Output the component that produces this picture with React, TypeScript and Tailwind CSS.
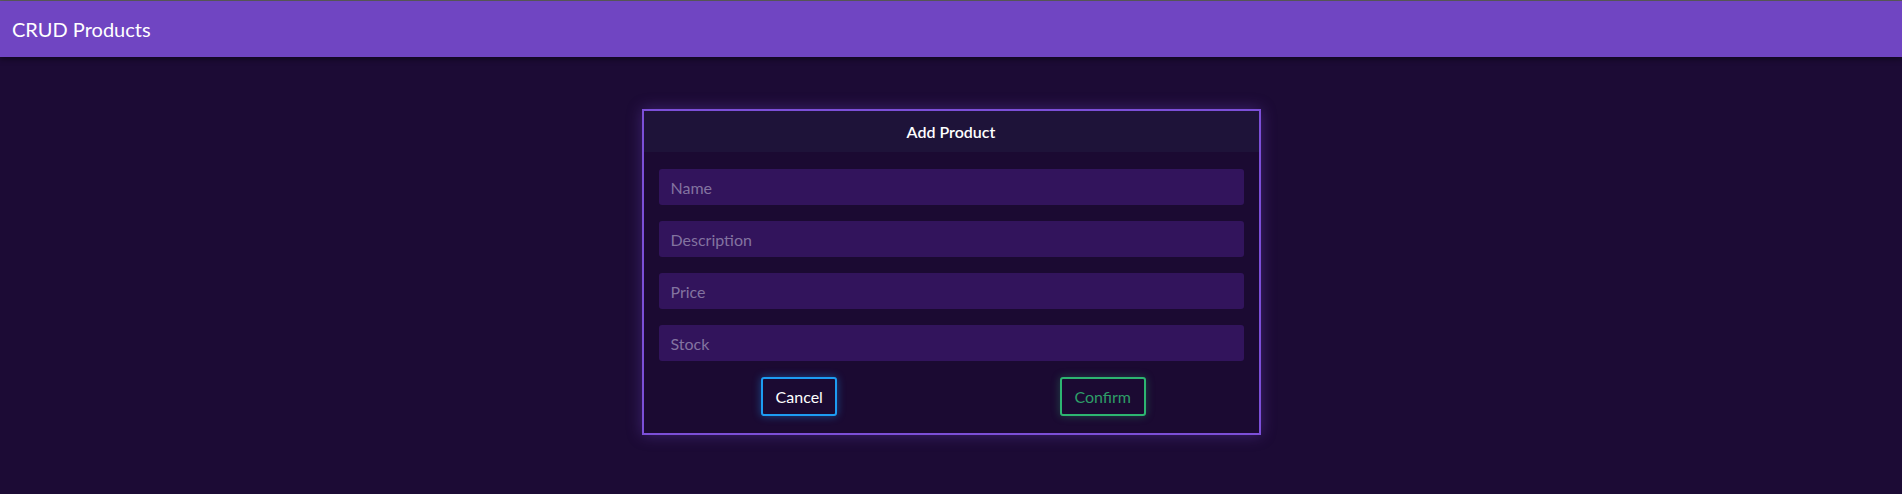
import React from "react";

export default function App() {
  const fields = ["Name", "Description", "Price", "Stock"];
  return (
    <div
      className="min-h-[494px] w-full bg-[#1c0b35] border-t border-[#5e5e5e]"
      style={{ fontFamily: "Lato, 'Noto Sans', sans-serif" }}
    >
      <header className="h-[56px] bg-[#7045c2] flex items-center px-[12px] shadow-[0_2px_6px_rgba(0,0,0,0.45)]">
        <h1 className="text-white text-[20px] leading-none">CRUD Products</h1>
      </header>
      <main className="flex justify-center pt-[52px]">
        <div className="w-[619px] border-2 border-[#7c4fd8] bg-[#1b0a32] shadow-[0_0_14px_rgba(124,79,216,0.35)]">
          <div className="h-[41px] bg-[#1e1339] flex items-center justify-center">
            <h2 className="text-white text-[16px] font-semibold">Add Product</h2>
          </div>
          <div className="px-[15px] pt-[17px] flex flex-col gap-[16px]">
            {fields.map((f) => (
              <input
                key={f}
                placeholder={f}
                className="h-[36px] w-full rounded-[3px] bg-[#32145c] px-[12px] text-[16px] text-white placeholder:text-[#8373a0] outline-none"
              />
            ))}
          </div>
          <div className="grid grid-cols-2 place-items-center px-[4px] pt-[16px] pb-[17px]">
            <button className="h-[39px] w-[76px] rounded-[3px] border-2 border-[#1d9cf2] bg-[#1b0a32] text-white text-[16px] shadow-[0_0_8px_rgba(29,156,242,0.45)]">
              Cancel
            </button>
            <button className="h-[39px] w-[86px] rounded-[3px] border-2 border-[#2db571] bg-[#1b0a32] text-[#2e9e68] text-[16px] shadow-[0_0_8px_rgba(45,181,113,0.35)]">
              Confirm
            </button>
          </div>
        </div>
      </main>
    </div>
  );
}
